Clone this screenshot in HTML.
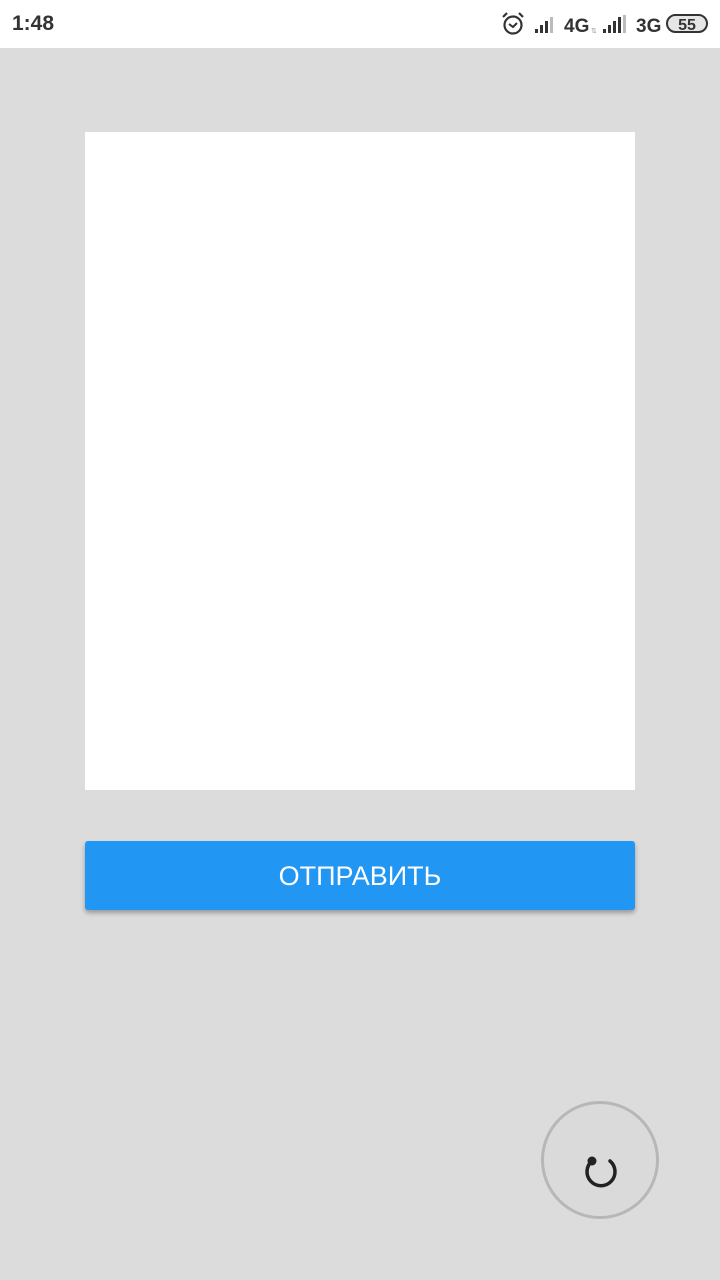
<!DOCTYPE html>
<html><head><meta charset="utf-8"><style>
body{margin:0;width:720px;height:1280px;background:#dcdcdc;position:relative;overflow:hidden;font-family:"Liberation Sans",sans-serif}
.sb{position:absolute;left:0;top:0;width:720px;height:48px;background:#fff}
.time{position:absolute;left:12px;top:12px;font-size:21px;font-weight:bold;color:#333}
.card{position:absolute;left:85px;top:132px;width:550px;height:658px;background:#fff}
.btn{position:absolute;left:85px;top:841px;width:550px;height:69px;background:#2196f3;border-radius:3px;box-shadow:0 3px 5px rgba(0,0,0,.3);color:#fff;font-size:27px;text-align:center;line-height:71px}
.fab{position:absolute;left:541px;top:1101px;width:112px;height:112px;border:3px solid #b7b7b7;border-radius:50%;background:#dadada}
</style></head><body>
<div class="sb"><div class="time">1:48</div>
<svg style="position:absolute;left:500px;top:10px" width="215" height="30" viewBox="0 0 215 30">
<circle cx="13" cy="15" r="8.5" fill="none" stroke="#333" stroke-width="2.2"/>
<path d="M9 14l4 3 4-4" fill="none" stroke="#333" stroke-width="2"/>
<path d="M3 7l4-4M23 7l-4-4" stroke="#333" stroke-width="2.2"/>
<rect x="35" y="19" width="3" height="4" fill="#333"/><rect x="40" y="15" width="3" height="8" fill="#333"/><rect x="45" y="11" width="3" height="12" fill="#333"/><rect x="50" y="7" width="3" height="16" fill="#bbb"/>
<text x="64" y="22" font-size="19" font-weight="bold" fill="#333" font-family="Liberation Sans">4G</text>
<text x="91" y="23" font-size="7" fill="#999">⇅</text>
<rect x="103" y="19" width="3" height="4" fill="#333"/><rect x="108" y="15" width="3" height="8" fill="#333"/><rect x="113" y="11" width="3" height="12" fill="#333"/><rect x="118" y="7" width="3" height="16" fill="#333"/><rect x="123" y="5" width="3" height="18" fill="#bbb"/>
<text x="136" y="22" font-size="19" font-weight="bold" fill="#333" font-family="Liberation Sans">3G</text>
<rect x="167" y="5" width="40" height="17" rx="8.5" fill="#e6e6e6" stroke="#333" stroke-width="2"/>
<text x="187" y="20" font-size="16" font-weight="bold" fill="#333" text-anchor="middle" font-family="Liberation Sans">55</text>
</svg></div>
<div class="card"></div>
<div class="btn">ОТПРАВИТЬ</div>
<div class="fab"><svg width="112" height="112" style="position:absolute;left:0;top:0">
<path d="M48 57 A14 14 0 1 0 66 57" fill="none" stroke="#222" stroke-width="3.5" stroke-linecap="round"/>
<circle cx="48" cy="57" r="4.5" fill="#222"/></svg></div>
</body></html>
